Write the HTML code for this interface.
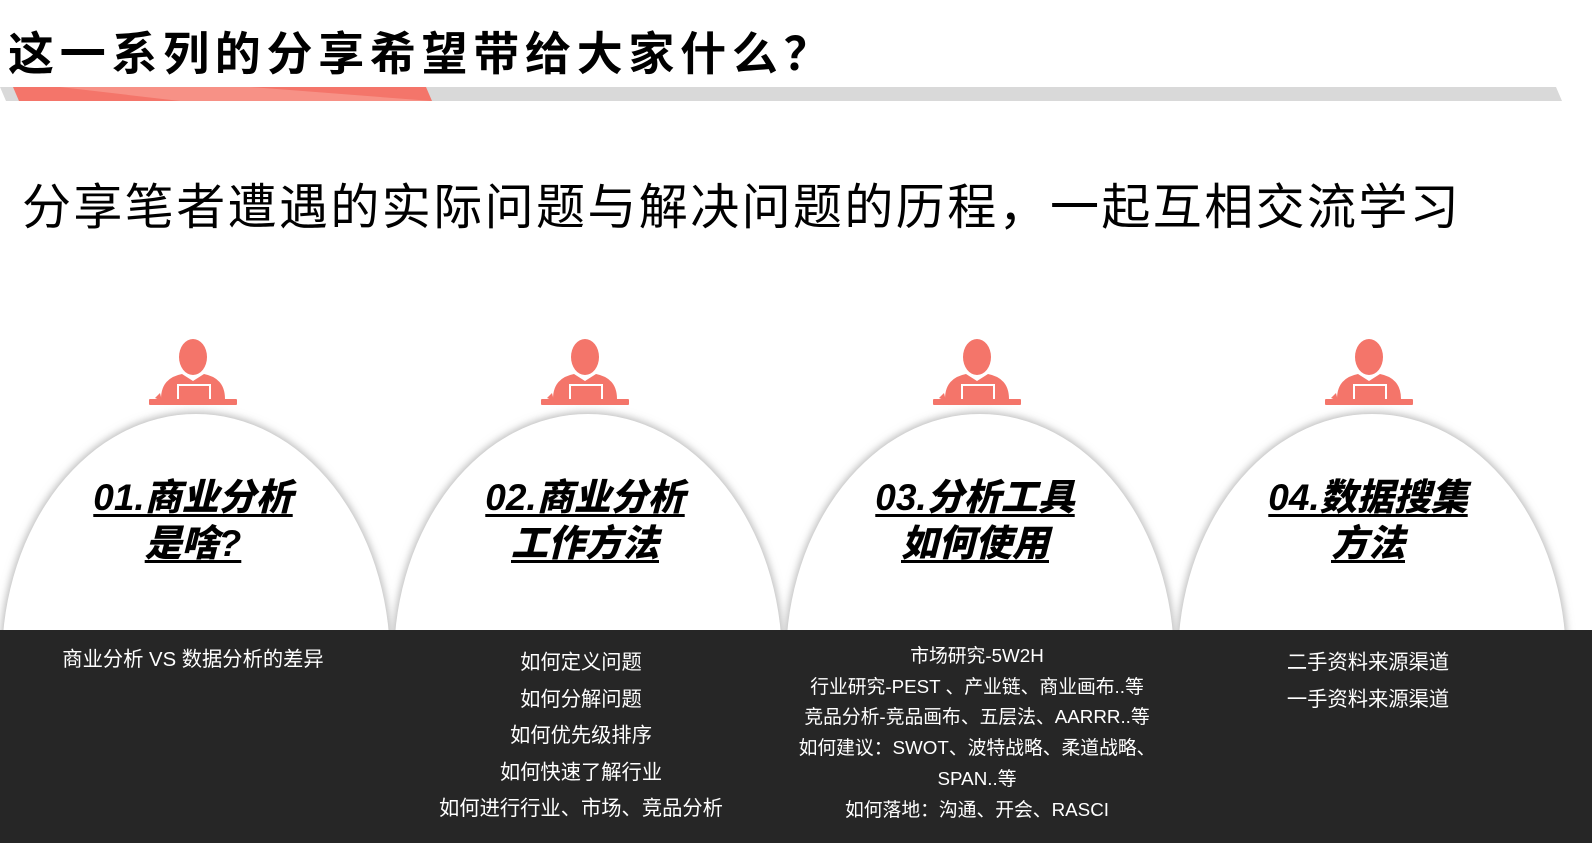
<!DOCTYPE html>
<html><head><meta charset="utf-8"><style>
html,body{margin:0;width:1592px;height:843px;overflow:hidden}
body{background:#fff;position:relative;font-family:"Liberation Sans","Noto Sans CJK SC",sans-serif}
.t{position:absolute;left:8px;top:18px;font-size:46px;font-weight:bold;color:#000;letter-spacing:5.7px;white-space:nowrap}
.s{position:absolute;left:22px;top:168px;font-size:49px;color:#000;letter-spacing:2.4px;white-space:nowrap}
.dark{position:absolute;left:0;top:630px;width:1592px;height:213px;background:#262626}
.h{position:absolute;width:392px;text-align:center;font-size:37px;font-weight:900;font-style:italic;line-height:46px;top:475px}
.h span{text-decoration:underline;text-decoration-thickness:3px;text-underline-offset:4px}
.l{position:absolute;width:392px;text-align:center;color:#fff;font-size:20.3px;white-space:nowrap}
</style></head><body>
<svg width="1592" height="843" style="position:absolute;left:0;top:0">
<defs><filter id="sh" x="-10%" y="-10%" width="120%" height="120%"><feGaussianBlur stdDeviation="4"/></filter>
<g id="p"><ellipse cx="0" cy="357" rx="14" ry="18" fill="#f4756a"/>
<path d="M-32 399 Q-32 378 -11 374 L0 381 L11 374 Q32 378 32 399 Z" fill="#f4756a"/>
<rect x="-15" y="385" width="32" height="17" fill="none" stroke="#fff" stroke-width="2"/>
<path d="M-31 401 L-38 398 L-33 393 Z" fill="#f4756a"/>
<rect x="-44" y="399" width="88" height="6" rx="1" fill="#f4756a"/></g></defs>
<polygon points="0,87 1556,87 1562,101 6,101" fill="#d9d9d9"/>
<polygon points="13,87 426,87 432,101 19,101" fill="#f4756a"/>
<polygon points="60,87 250,87 432,101 180,101" fill="#f7958a" opacity="0.9"/>
<g>
<ellipse cx="196" cy="660" rx="196" ry="248" fill="#bbb" filter="url(#sh)"/>
<ellipse cx="588" cy="660" rx="196" ry="248" fill="#bbb" filter="url(#sh)"/>
<ellipse cx="980" cy="660" rx="196" ry="248" fill="#bbb" filter="url(#sh)"/>
<ellipse cx="1372" cy="660" rx="196" ry="248" fill="#bbb" filter="url(#sh)"/>
<ellipse cx="196" cy="660" rx="194" ry="246" fill="#fff"/>
<ellipse cx="588" cy="660" rx="194" ry="246" fill="#fff"/>
<ellipse cx="980" cy="660" rx="194" ry="246" fill="#fff"/>
<ellipse cx="1372" cy="660" rx="194" ry="246" fill="#fff"/>
</g>
<use href="#p" x="193"/><use href="#p" x="585"/><use href="#p" x="977"/><use href="#p" x="1369"/>
</svg>
<div class="t">这一系列的分享希望带给大家什么？</div>
<div class="s">分享笔者遭遇的实际问题与解决问题的历程，一起互相交流学习</div>
<div class="dark"></div>
<div class="h" style="left:-3px"><span>01.商业分析</span><br><span>是啥?</span></div>
<div class="h" style="left:389px"><span>02.商业分析</span><br><span>工作方法</span></div>
<div class="h" style="left:779px"><span>03.分析工具</span><br><span>如何使用</span></div>
<div class="h" style="left:1172px"><span>04.数据搜集</span><br><span>方法</span></div>
<div class="l" style="left:-3px;top:648px;line-height:24px">商业分析 VS 数据分析的差异</div>
<div class="l" style="left:385px;top:645px;line-height:36.5px">如何定义问题<br>如何分解问题<br>如何优先级排序<br>如何快速了解行业<br>如何进行行业、市场、竞品分析</div>
<div class="l" style="left:781px;top:641px;line-height:30.7px;font-size:18.8px">市场研究-5W2H<br>行业研究-PEST 、产业链、商业画布..等<br>竞品分析-竞品画布、五层法、AARRR..等<br>如何建议：SWOT、波特战略、柔道战略、<br>SPAN..等<br>如何落地：沟通、开会、RASCI</div>
<div class="l" style="left:1172px;top:645px;line-height:36.5px">二手资料来源渠道<br>一手资料来源渠道</div>
</body></html>
